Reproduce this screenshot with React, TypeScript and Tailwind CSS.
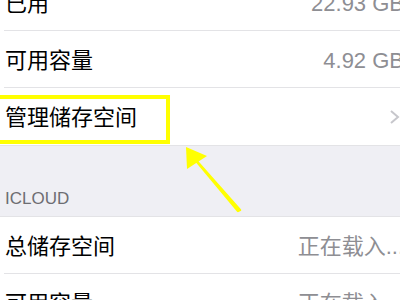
import React from 'react'

const font = { fontFamily: '"Liberation Sans", "Noto Sans CJK SC", sans-serif' }

function Row({ label, value, chevron = false, last = false }: { label: string; value?: string; chevron?: boolean; last?: boolean }) {
  return (
    <div className="bg-white pl-[4px]">
      <div className={`h-[57px] flex items-center justify-between pr-[4px] ${last ? '' : 'border-b border-[#e3e3e6]'}`}>
        <span className="pl-[1px] text-[22px] text-black leading-none pt-[3px]">{label}</span>
        {value && <span className="text-[22px] text-[#8e8e93] leading-none pt-[3px]">{value}</span>}
        {chevron && (
          <svg width="12" height="16" viewBox="0 0 12 16" className="mr-[3px]">
            <path d="M2 2 L9 8 L2 14" fill="none" stroke="#c7c7cc" strokeWidth="2" />
          </svg>
        )}
      </div>
    </div>
  )
}

export default function App() {
  return (
    <div className="relative w-[400px] h-[300px] overflow-hidden bg-[#efeff4]" style={font}>
      <div className="w-[408px] mt-[-26px]">
        <Row label="已用" value="22.93 GB" />
        <Row label="可用容量" value="4.92 GB" />
        <Row label="管理储存空间" chevron last />
        <div className="h-[72px] border-t border-[#e3e3e6] border-b flex items-end pl-[5px] pb-[9px]">
          <span className="text-[17px] text-[#6d6d72] leading-none">ICLOUD</span>
        </div>
        <Row label="总储存空间" value="正在载入..." />
        <Row label="可用容量" value="正在载入..." />
      </div>

      <div className="absolute left-[-6px] top-[95px] w-[176px] h-[49px] border-[4px] border-[#ffff00]" />

      <svg className="absolute left-0 top-0" width="400" height="300" viewBox="0 0 400 300">
        <polygon points="186,147 187,169 207,156" fill="#ffff00" />
        <path d="M194 158 L240 210 L238 211 L198 163 Z" fill="#ffff00" stroke="#ffff00" strokeWidth="2.5" strokeLinejoin="round" />
      </svg>
    </div>
  )
}
